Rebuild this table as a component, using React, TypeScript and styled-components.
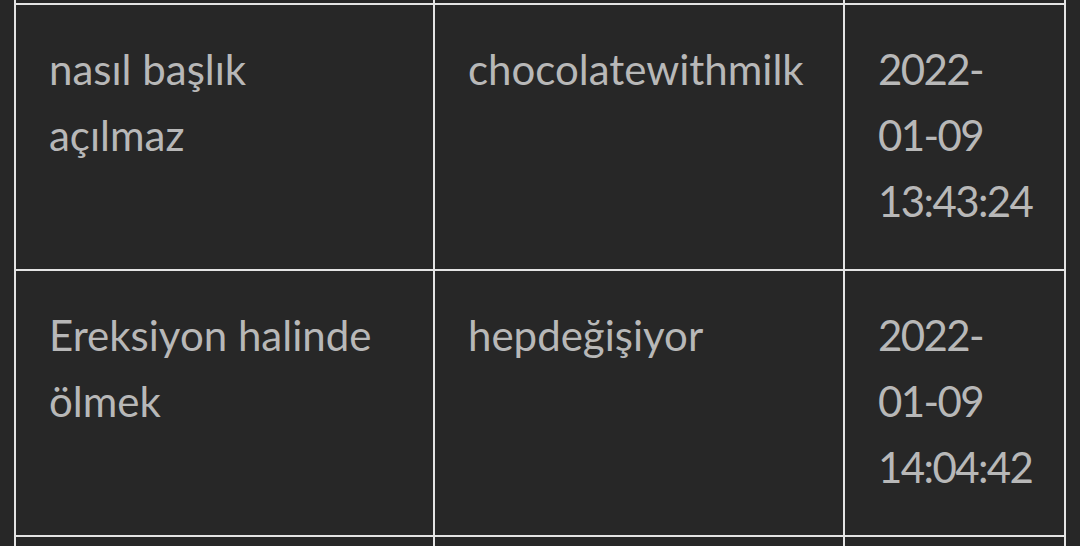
import React, { ReactElement } from 'react'
import styled, { createGlobalStyle } from 'styled-components'

const GlobalStyle = createGlobalStyle`
  html, body {
    margin: 0;
    padding: 0;
    background: #272727;
  }
  body {
    font-family: Lato, 'Noto Sans', sans-serif;
    color: #b8b8b8;
  }
`

const Page = styled.div`
  height: 546px;
  overflow: hidden;
  padding-left: 14px;
`

const Table = styled.table`
  border-collapse: separate;
  border-spacing: 0;
  table-layout: fixed;
  width: 1052px;
  border-left: 2px solid #e4e4e4;
`

const Col = styled.col<{ $w: number }>`
  width: ${p => p.$w}px;
`

const Cell = styled.td<{ $padRight?: number; $tight?: boolean }>`
  padding: 31px ${p => p.$padRight ?? 33}px 35px 33px;
  border-right: 2px solid #e4e4e4;
  border-bottom: 2px solid #e4e4e4;
  font-size: 42px;
  line-height: 66px;
  letter-spacing: ${p => (p.$tight ? '-1.6px' : 'normal')};
  vertical-align: top;
`

// rows scrolled partly out of view above and below
const SpillCell = styled.td<{ $h: number }>`
  height: ${p => p.$h}px;
  padding: 0;
  border-right: 2px solid #e4e4e4;
  border-bottom: 2px solid #e4e4e4;
`

// outer widths of each column, border included
const widths = [419, 410, 221]

const rows = [
  { title: 'nasıl başlık açılmaz', author: 'chocolatewithmilk', date: '2022-01-09 13:43:24' },
  { title: 'Ereksiyon halinde ölmek', author: 'hepdeğişiyor', date: '2022-01-09 14:04:42' },
]

const App = (): ReactElement => (
  <Page>
    <GlobalStyle />
    <Table>
      <colgroup>
        {widths.map(w => (
          <Col key={w} $w={w} />
        ))}
      </colgroup>
      <tbody>
        <tr>
          <SpillCell $h={3} />
          <SpillCell $h={3} />
          <SpillCell $h={3} />
        </tr>
        {rows.map(row => (
          <tr key={row.date}>
            <Cell $padRight={46}>{row.title}</Cell>
            <Cell>{row.author}</Cell>
            <Cell $tight>{row.date}</Cell>
          </tr>
        ))}
        <tr>
          <SpillCell $h={40} />
          <SpillCell $h={40} />
          <SpillCell $h={40} />
        </tr>
      </tbody>
    </Table>
  </Page>
)

export default App
